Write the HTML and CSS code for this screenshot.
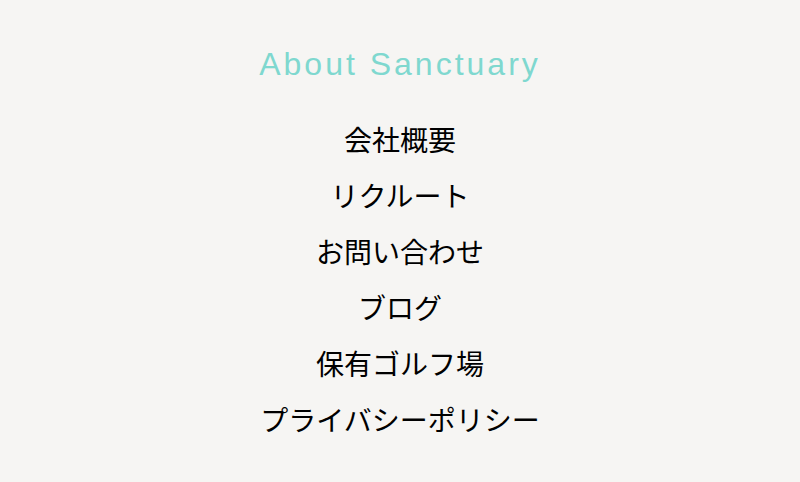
FILE: index.html
```html
<!DOCTYPE html>
<html lang="ja">
<head>
<meta charset="utf-8">
<link rel="stylesheet" href="styles.css">
</head>
<body>
<section class="about">
  <h2 class="title">About Sanctuary</h2>
  <ul class="links">
    <li><a href="#">会社概要</a></li>
    <li><a href="#">リクルート</a></li>
    <li><a href="#">お問い合わせ</a></li>
    <li><a href="#">ブログ</a></li>
    <li><a href="#">保有ゴルフ場</a></li>
    <li><a href="#">プライバシーポリシー</a></li>
  </ul>
</section>
</body>
</html>
```
FILE: styles.css
```css
html, body {
  margin: 0;
  padding: 0;
}
body {
  background: #f6f5f3;
  width: 800px;
  height: 482px;
  overflow: hidden;
}
.about {
  display: flex;
  flex-direction: column;
  align-items: center;
  padding-top: 44px;
}
.title {
  margin: 0;
  font-family: "Liberation Sans", Arial, sans-serif;
  font-weight: normal;
  font-size: 32px;
  line-height: 40px;
  letter-spacing: 3px;
  color: #7fd8cf;
}
.links {
  list-style: none;
  margin: 27px 0 0;
  padding: 0;
  display: flex;
  flex-direction: column;
  align-items: center;
}
.links li {
  height: 56px;
  line-height: 56px;
}
.links a {
  font-family: "Noto Sans CJK JP", sans-serif;
  font-size: 28px;
  color: #000;
  text-decoration: none;
}
```
